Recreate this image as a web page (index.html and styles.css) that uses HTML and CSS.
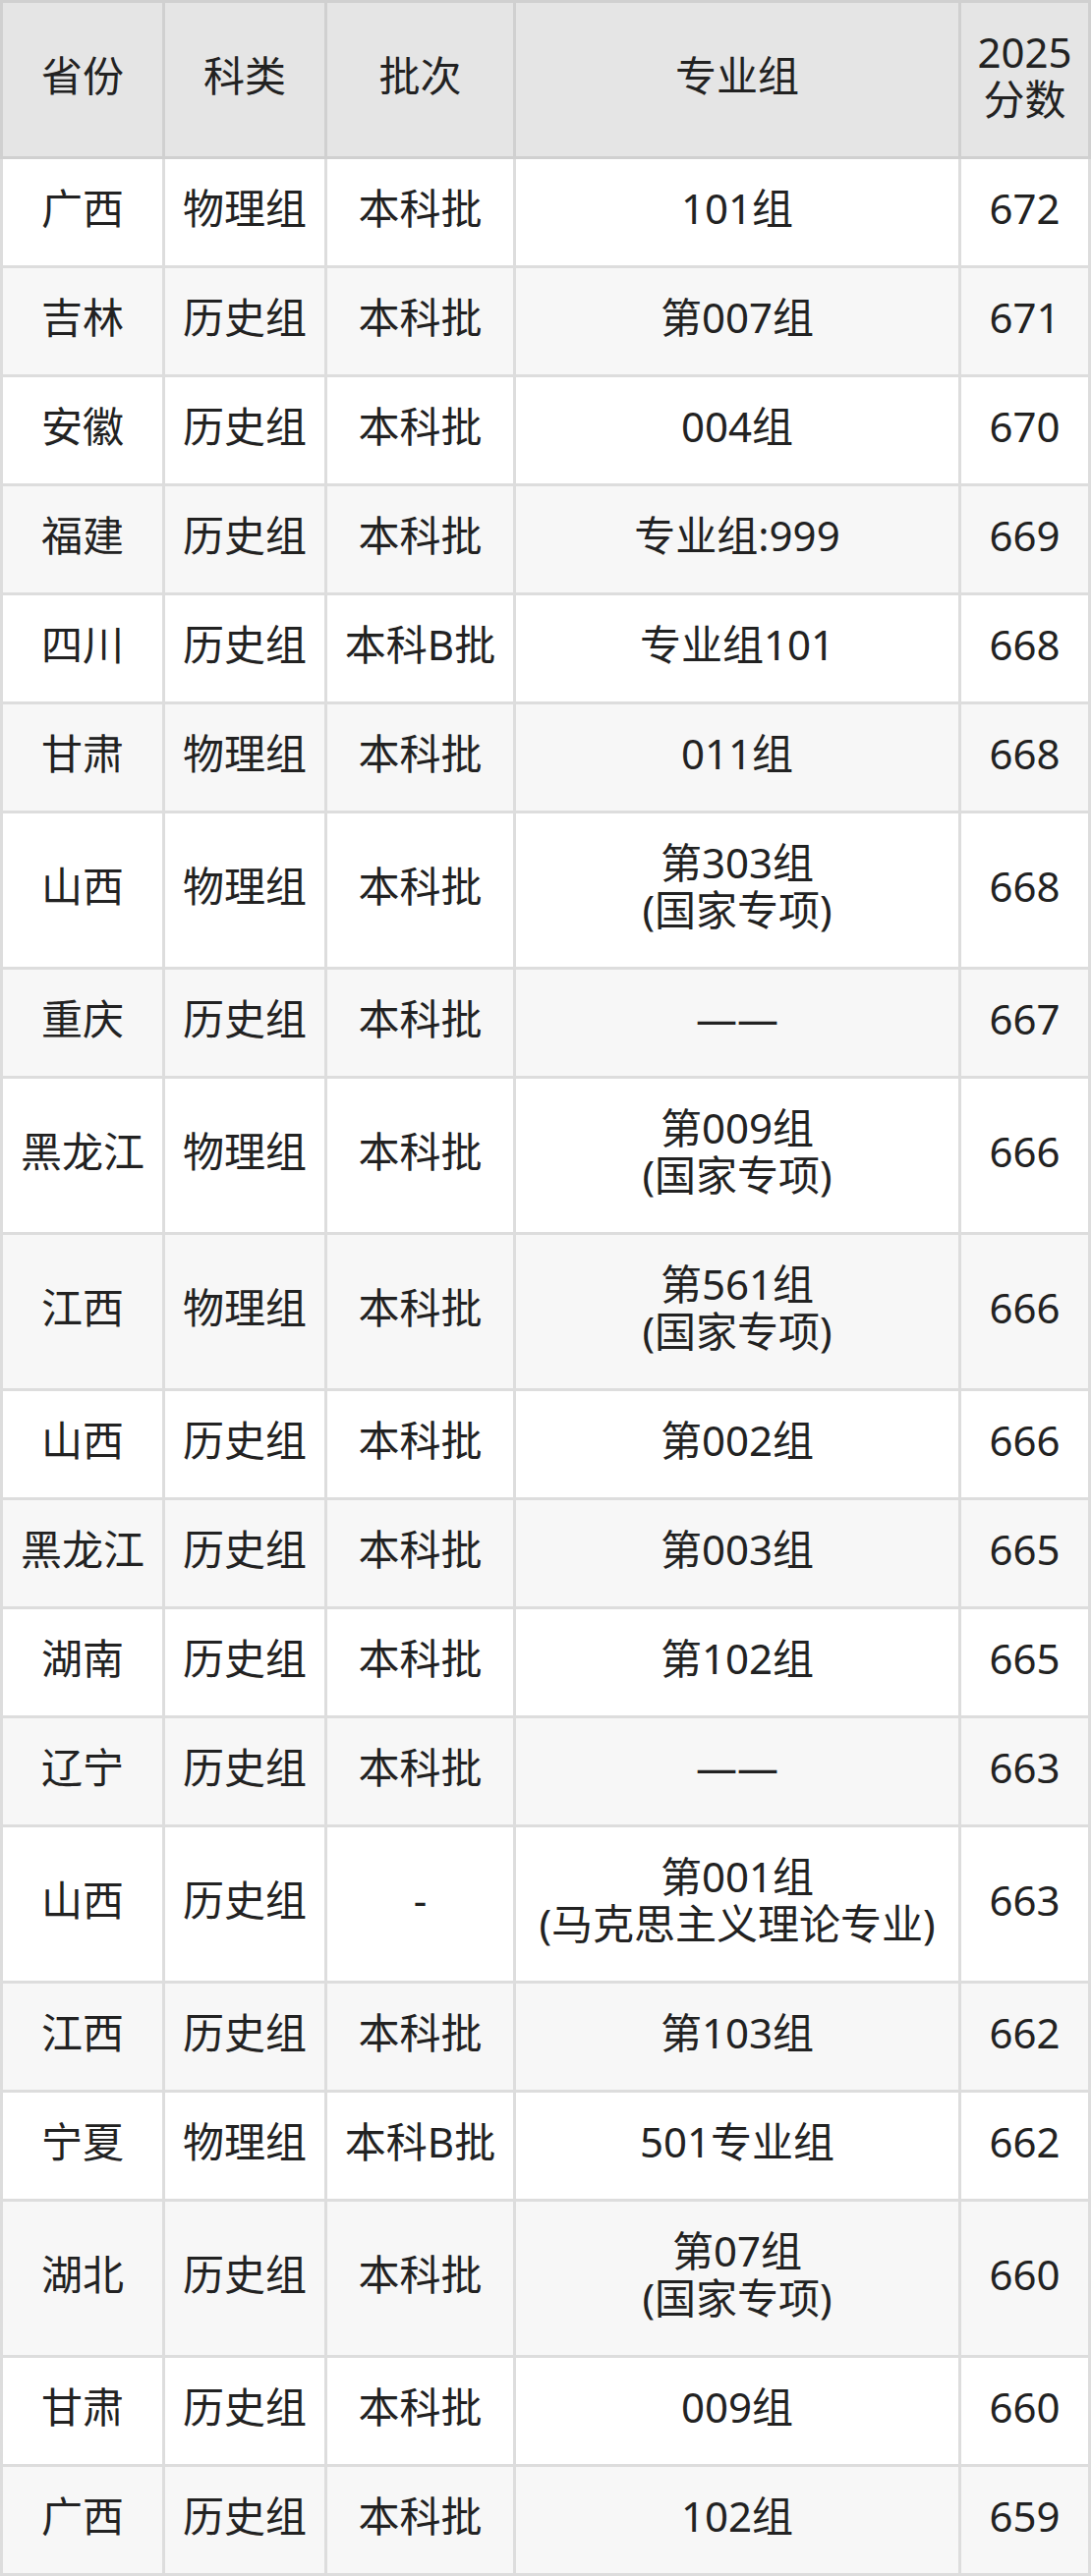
FILE: index.html
```html
<!DOCTYPE html>
<html lang="zh-CN">
<head>
<meta charset="utf-8">
<title>2025分数</title>
<link rel="stylesheet" href="styles.css">
</head>
<body>
<table class="score-table">
  <thead>
    <tr>
      <th class="c-prov">省份</th>
      <th class="c-type">科类</th>
      <th class="c-batch">批次</th>
      <th class="c-group">专业组</th>
      <th class="c-score">2025<br>分数</th>
    </tr>
  </thead>
  <tbody>
    <tr><td>广西</td><td>物理组</td><td>本科批</td><td>101组</td><td>672</td></tr>
    <tr><td>吉林</td><td>历史组</td><td>本科批</td><td>第007组</td><td>671</td></tr>
    <tr><td>安徽</td><td>历史组</td><td>本科批</td><td>004组</td><td>670</td></tr>
    <tr><td>福建</td><td>历史组</td><td>本科批</td><td>专业组:999</td><td>669</td></tr>
    <tr><td>四川</td><td>历史组</td><td>本科B批</td><td>专业组101</td><td>668</td></tr>
    <tr><td>甘肃</td><td>物理组</td><td>本科批</td><td>011组</td><td>668</td></tr>
    <tr><td>山西</td><td>物理组</td><td>本科批</td><td>第303组<br>(国家专项)</td><td>668</td></tr>
    <tr><td>重庆</td><td>历史组</td><td>本科批</td><td>——</td><td>667</td></tr>
    <tr><td>黑龙江</td><td>物理组</td><td>本科批</td><td>第009组<br>(国家专项)</td><td>666</td></tr>
    <tr><td>江西</td><td>物理组</td><td>本科批</td><td>第561组<br>(国家专项)</td><td>666</td></tr>
    <tr><td>山西</td><td>历史组</td><td>本科批</td><td>第002组</td><td>666</td></tr>
    <tr><td>黑龙江</td><td>历史组</td><td>本科批</td><td>第003组</td><td>665</td></tr>
    <tr><td>湖南</td><td>历史组</td><td>本科批</td><td>第102组</td><td>665</td></tr>
    <tr><td>辽宁</td><td>历史组</td><td>本科批</td><td>——</td><td>663</td></tr>
    <tr><td>山西</td><td>历史组</td><td>-</td><td>第001组<br>(马克思主义理论专业)</td><td>663</td></tr>
    <tr><td>江西</td><td>历史组</td><td>本科批</td><td>第103组</td><td>662</td></tr>
    <tr><td>宁夏</td><td>物理组</td><td>本科B批</td><td>501专业组</td><td>662</td></tr>
    <tr><td>湖北</td><td>历史组</td><td>本科批</td><td>第07组<br>(国家专项)</td><td>660</td></tr>
    <tr><td>甘肃</td><td>历史组</td><td>本科批</td><td>009组</td><td>660</td></tr>
    <tr><td>广西</td><td>历史组</td><td>本科批</td><td>102组</td><td>659</td></tr>
  </tbody>
</table>
</body>
</html>
```

FILE: styles.css
```css
html, body {
  margin: 0;
  padding: 0;
  background: #ffffff;
}

.score-table {
  width: 1110px;
  border-collapse: separate;
  border-spacing: 0;
  table-layout: fixed;
  font-family: "Noto Sans", "Noto Sans CJK SC", sans-serif;
  font-size: 42px;
  line-height: 48px;
  color: #222222;
}

.score-table th,
.score-table td {
  box-sizing: border-box;
  padding: 26px 2px 34px;
  text-align: center;
  vertical-align: middle;
  font-weight: normal;
  border-right: 3px solid #dddddd;
  border-bottom: 3px solid #dddddd;
  white-space: nowrap;
}

.score-table th:first-child,
.score-table td:first-child {
  border-left: 3px solid #dddddd;
}

.score-table thead th {
  background: #e5e5e5;
  border-top: 3px solid #d0d0d0;
  border-right-color: #d0d0d0;
  border-bottom-color: #d0d0d0;
}

.score-table thead th:first-child {
  border-left-color: #d0d0d0;
}

.c-prov { width: 168px; }
.c-type { width: 165px; }
.c-batch { width: 192px; }
.c-group { width: 453px; }
.c-score { width: 132px; }

.score-table tbody tr:nth-child(odd) td {
  background: #ffffff;
}

.score-table tbody tr:nth-child(even) td {
  background: #f7f7f7;
}
```
